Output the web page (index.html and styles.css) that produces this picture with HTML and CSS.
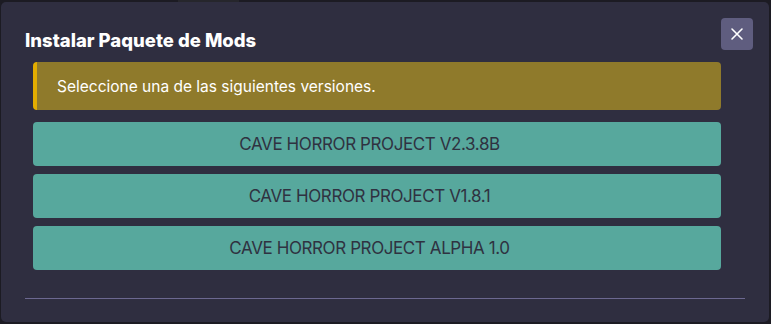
FILE: index.html
```html
<!DOCTYPE html>
<html lang="es">
<head>
    <meta charset="UTF-8">
    <meta name="viewport" content="width=device-width, initial-scale=1.0">
    <title>Instalar Paquete de Mods</title>
    <link rel="stylesheet" href="styles.css">
</head>
<body>
    <div class="top-tab"></div>
    <div class="modal">
        <header class="modal-header">
            <h1>Instalar Paquete de Mods</h1>
            <button class="close-btn" aria-label="Cerrar">
                <svg width="14" height="14" viewBox="0 0 14 14">
                    <path d="M2 2 L12 12 M12 2 L2 12" stroke="#fff" stroke-width="1.6" stroke-linecap="round"/>
                </svg>
            </button>
        </header>

        <div class="modal-body">
            <div class="alert">Seleccione una de las siguientes versiones.</div>
            <div class="versions">
                <button class="version-btn">Cave Horror Project V2.3.8B</button>
                <button class="version-btn">Cave Horror Project V1.8.1</button>
                <button class="version-btn">Cave Horror Project Alpha 1.0</button>
            </div>
        </div>

        <div class="modal-footer"></div>
    </div>
</body>
</html>
```

FILE: styles.css
```css
:root {
    --page: #1c1b23;
    --modal: #2f2e40;
    --close: #5f5d7f;
    --alert: #8f7a2b;
    --alert-edge: #e3ad00;
    --teal: #57a89d;
    --ink: #2f3241;
    --line: #6c6890;
}

* {
    margin: 0;
    padding: 0;
    box-sizing: border-box;
}

body {
    background-color: var(--page);
    font-family: Inter, "Noto Sans", sans-serif;
    width: 771px;
    height: 324px;
    overflow: hidden;
    position: relative;
}

.top-tab {
    position: absolute;
    top: 0;
    left: 178px;
    width: 61px;
    height: 2px;
    background: #26262c;
}

.modal {
    margin: 2px 2px 2px 1px;
    height: 320px;
    background-color: var(--modal);
    border-radius: 5px;
    display: flex;
    flex-direction: column;
}

.modal-header {
    display: flex;
    justify-content: space-between;
    align-items: flex-start;
    padding: 16px 16px 0 24px;
}

.modal-header h1 {
    font-size: 18.5px;
    font-weight: 800;
    line-height: 20px;
    color: #fff;
    margin-top: 12px;
}

.close-btn {
    width: 32px;
    height: 32px;
    border: none;
    border-radius: 4px;
    background-color: var(--close);
    display: flex;
    align-items: center;
    justify-content: center;
    cursor: pointer;
}

.modal-body {
    padding: 12px 48px 0 32px;
}

.alert {
    height: 48px;
    display: flex;
    align-items: center;
    padding-left: 20px;
    background-color: var(--alert);
    border-left: 4px solid var(--alert-edge);
    border-radius: 4px;
    color: #fff;
    font-size: 15.5px;
}

.versions {
    display: flex;
    flex-direction: column;
    gap: 8px;
    margin-top: 12px;
}

.version-btn {
    height: 44px;
    padding-right: 15px;
    border: none;
    border-radius: 4px;
    background-color: var(--teal);
    color: var(--ink);
    font-family: inherit;
    font-size: 17px;
    letter-spacing: -0.4px;
    text-transform: uppercase;
    cursor: pointer;
}

.modal-footer {
    margin: 28px 24px 0 24px;
    border-top: 1px solid var(--line);
}
```
